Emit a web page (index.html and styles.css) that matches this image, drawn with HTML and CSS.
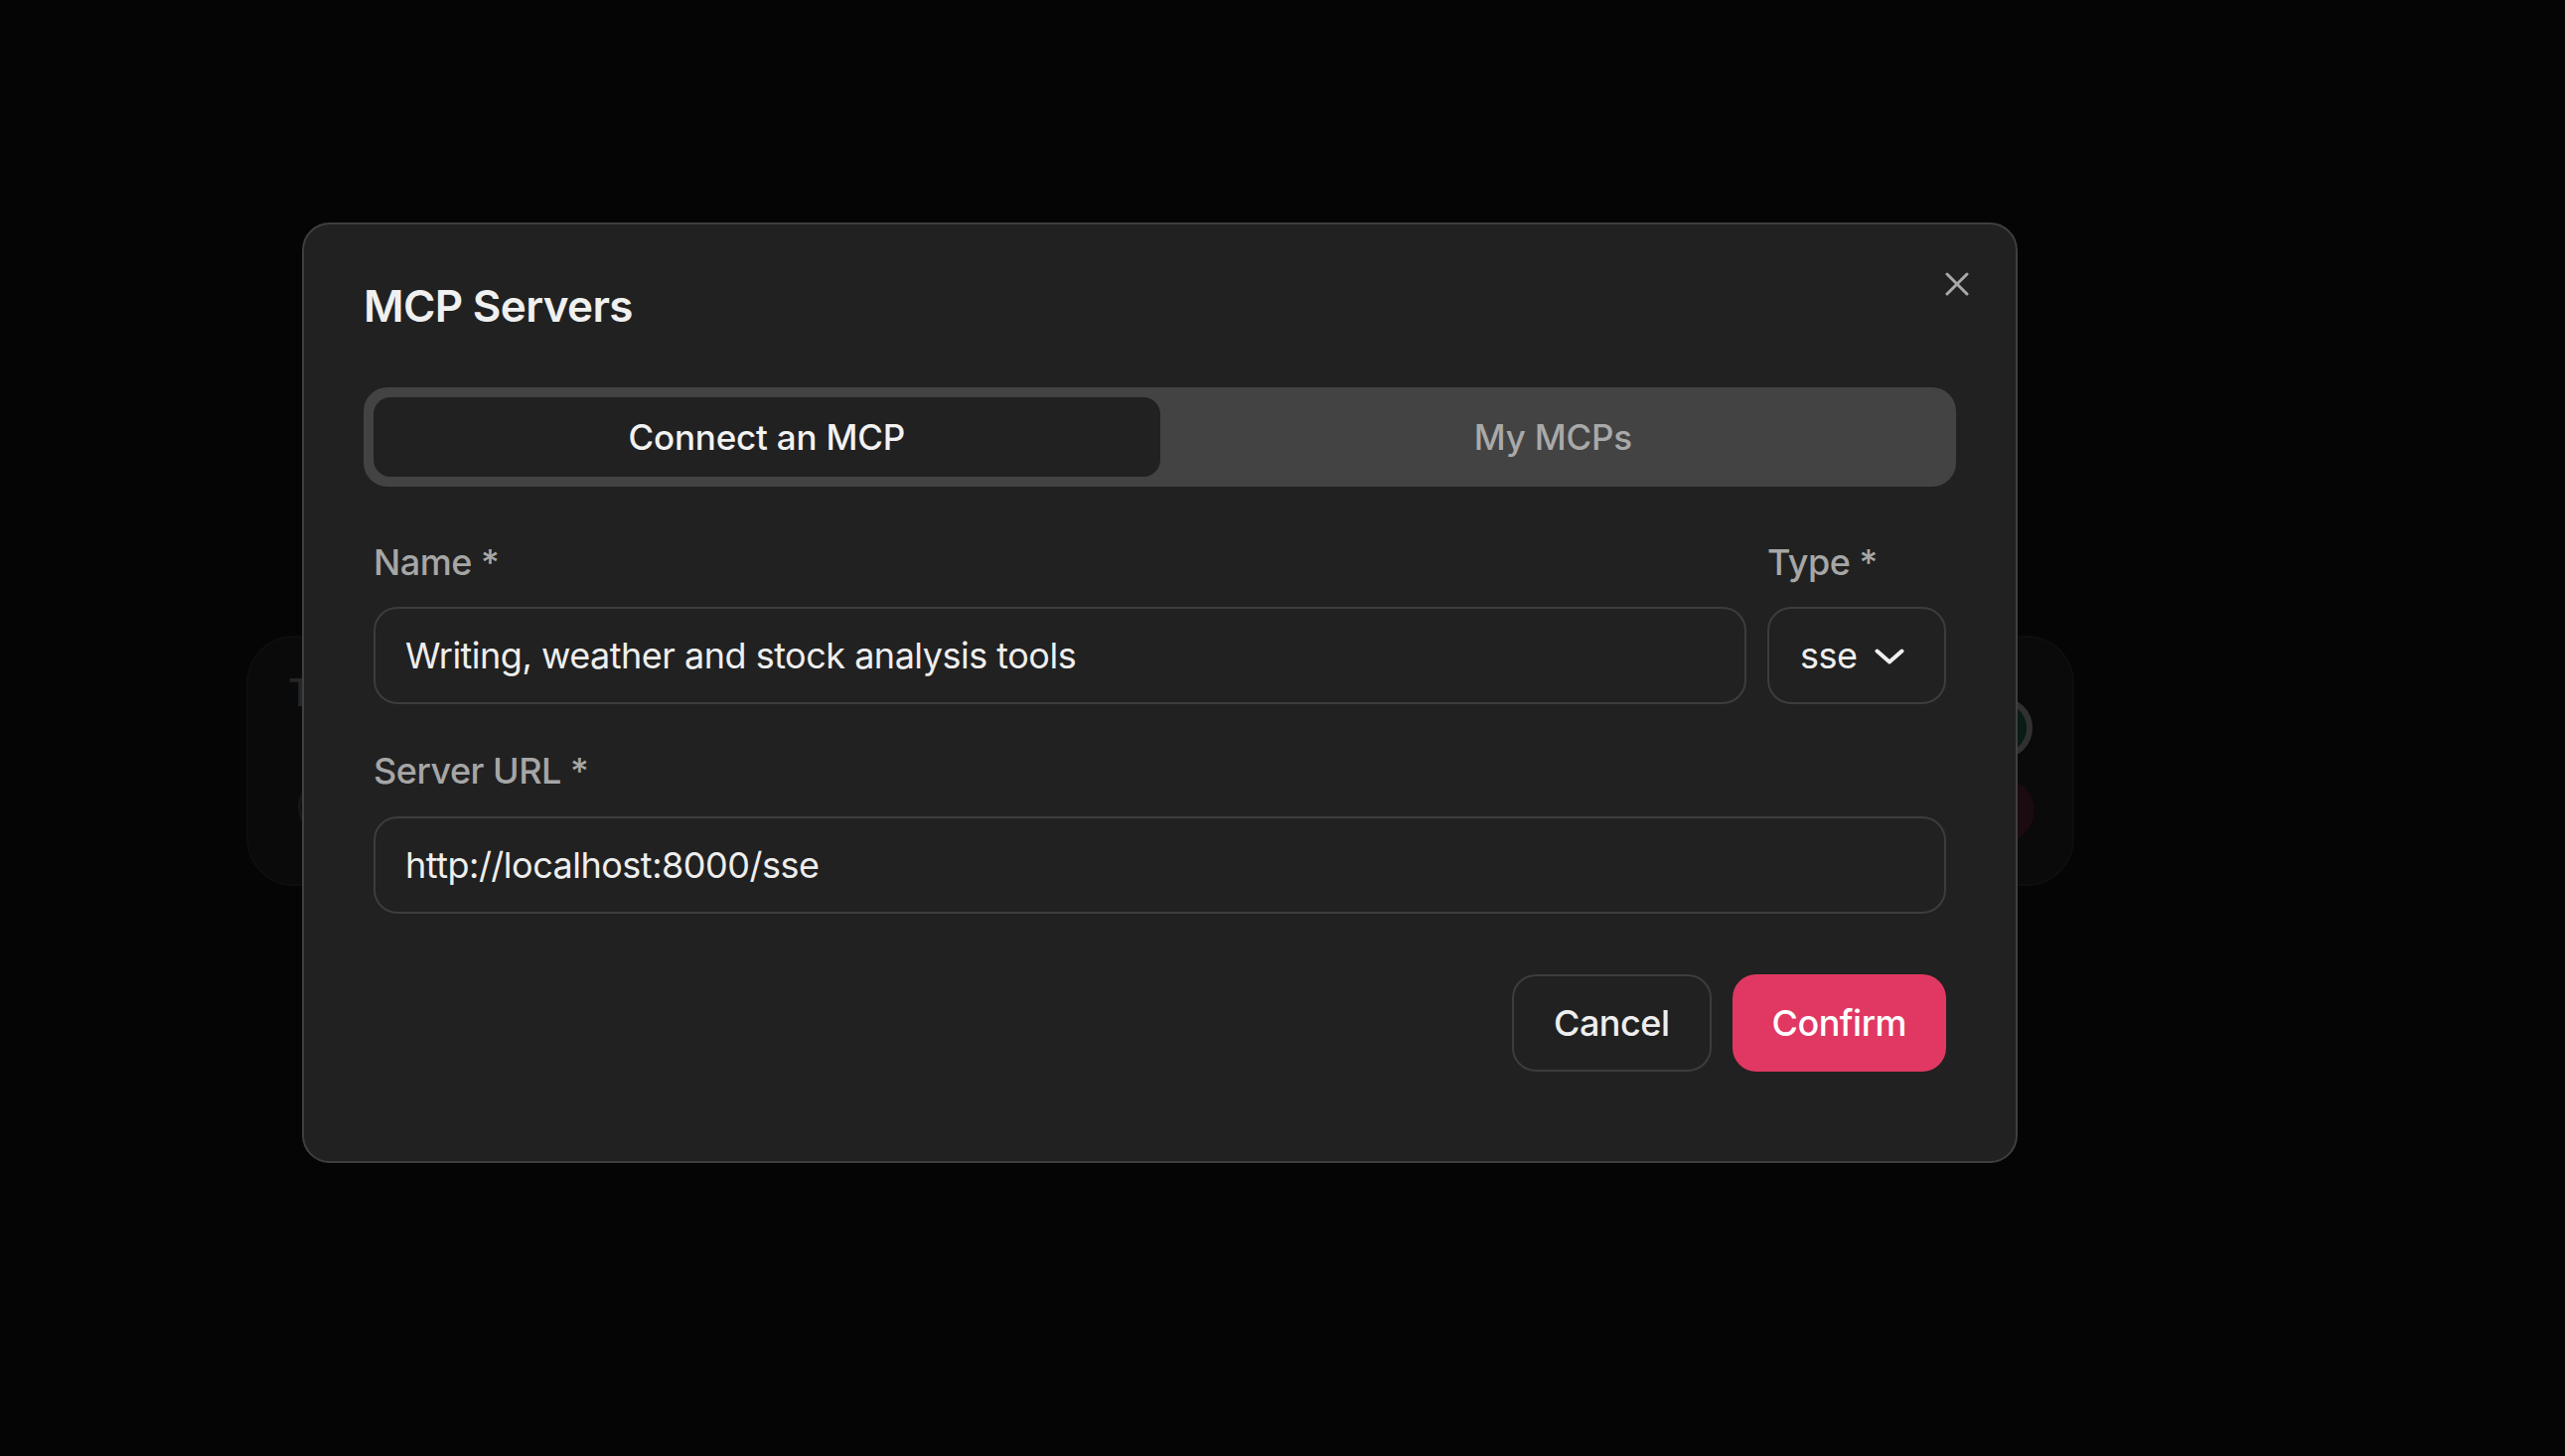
FILE: index.html
```html
<!DOCTYPE html>
<html lang="en">
<head>
<meta charset="utf-8">
<title>MCP Servers</title>
<link rel="stylesheet" href="styles.css">
</head>
<body>
<div class="page">
  <section class="bg-card">
    <div class="bg-text">
      <div class="bg-title">Tools</div>
      <div class="bg-pill">Use</div>
    </div>
    <div class="bg-actions">
      <span class="bg-ring"></span>
      <span class="bg-dot"></span>
    </div>
  </section>
</div>

<div class="overlay">
  <div class="modal" role="dialog" aria-label="MCP Servers">
    <button class="close" aria-label="Close">
      <svg width="24" height="24" viewBox="0 0 24 24"><path d="M2 2L22 22M22 2L2 22" stroke="#a9a9a9" stroke-width="3" stroke-linecap="round" fill="none"/></svg>
    </button>
    <h2 class="title">MCP Servers</h2>
    <div class="tabs">
      <button class="tab tab-active">Connect an MCP</button>
      <button class="tab">My MCPs</button>
    </div>
    <form class="form">
      <div class="row">
        <div class="field field-grow">
          <label class="label">Name *</label>
          <div class="input">Writing, weather and stock analysis tools</div>
        </div>
        <div class="field field-type">
          <label class="label">Type *</label>
          <div class="input select">
            <span>sse</span>
            <svg width="30" height="16" viewBox="0 0 30 16"><polyline points="2.5,2.5 15,13.5 27.5,2.5" stroke="#f0f0f0" stroke-width="4" stroke-linecap="round" stroke-linejoin="round" fill="none"/></svg>
          </div>
        </div>
      </div>
      <div class="field field-url">
        <label class="label">Server URL *</label>
        <div class="input">http://localhost:8000/sse</div>
      </div>
      <div class="footer">
        <button type="button" class="btn btn-cancel">Cancel</button>
        <button type="button" class="btn btn-confirm">Confirm</button>
      </div>
    </form>
  </div>
</div>
</body>
</html>
```

FILE: styles.css
```css
* { box-sizing: border-box; }

html, body {
  margin: 0;
  padding: 0;
  background: #050505;
  font-family: Inter, "Noto Sans", "Liberation Sans", sans-serif;
  color: #f0f0f0;
}

.page {
  padding: 640px 0 0 248px;
  min-height: 1466px;
}

.bg-card {
  width: 1840px;
  height: 252px;
  border-radius: 48px;
  background: #0a0a0a;
  border: 2px solid #0e0e0e;
  display: flex;
  justify-content: space-between;
  padding: 32px 38px 0 40px;
}

.bg-title {
  font-size: 38px;
  line-height: 46px;
  color: #262626;
  font-weight: 500;
}

.bg-pill {
  margin-top: 62px;
  margin-left: 10px;
  font-size: 1px;
  color: transparent;
  width: 200px;
  height: 60px;
  border-radius: 30px;
  border: 3px solid #161616;
}

.bg-actions {
  display: flex;
  flex-direction: column;
  gap: 20px;
  padding-top: 28px;
}

.bg-ring {
  width: 62px;
  height: 62px;
  border-radius: 50%;
  border: 6px solid #303030;
  background: #0a1a16;
}

.bg-dot {
  width: 64px;
  height: 64px;
  border-radius: 50%;
  background: #1b0a0f;
}

.overlay {
  position: fixed;
  inset: 0;
  display: flex;
  align-items: flex-start;
  padding: 224px 0 0 304px;
}

.modal {
  position: relative;
  width: 1727px;
  background: #212121;
  border: 2px solid #3f3f3f;
  border-radius: 28px;
  padding: 56px 60px 90px 60px;
}

.close {
  position: absolute;
  top: 48px;
  right: 47px;
  width: 24px;
  height: 24px;
  padding: 0;
  border: 0;
  background: transparent;
  display: flex;
}

.title {
  margin: 0;
  font-size: 44px;
  line-height: 53px;
  font-weight: 600;
  color: #f0f0f0;
  letter-spacing: -0.65px;
}

.tabs {
  margin-top: 55px;
  height: 100px;
  padding: 10px;
  background: #434343;
  border-radius: 24px;
  display: grid;
  grid-template-columns: 1fr 1fr;
}

.tab {
  font-family: inherit;
  border: 0;
  background: transparent;
  border-radius: 17px;
  font-size: 35px;
  font-weight: 500;
  letter-spacing: -0.2px;
  color: #a9a9a9;
  padding: 0;
}

.tab-active {
  background: #212121;
  color: #f2f2f2;
}

.form {
  margin: 54px 0 0 0;
  padding: 0 10px;
}

.row {
  display: flex;
  gap: 21px;
}

.field {
  display: flex;
  flex-direction: column;
}

.field-grow { flex: 1; }

.field-type { width: 180px; }

.field-url { margin-top: 45px; }

.label {
  font-size: 36px;
  line-height: 44px;
  font-weight: 500;
  letter-spacing: -0.5px;
  color: #a6a6a6;
  margin-bottom: 23px;
}

.field-url .label { margin-bottom: 24px; }

.input {
  height: 98px;
  border: 2px solid #3d3d3d;
  border-radius: 24px;
  padding: 0 30px;
  display: flex;
  align-items: center;
  font-size: 36px;
  letter-spacing: -0.5px;
  color: #eeeeee;
  white-space: nowrap;
}

.select {
  justify-content: space-between;
  padding: 0 40px 0 31px;
}

.select svg { flex: none; margin-top: 2px; }

.footer {
  margin-top: 61px;
  display: flex;
  justify-content: flex-end;
  gap: 21px;
}

.btn {
  font-family: inherit;
  height: 98px;
  border-radius: 24px;
  font-size: 36px;
  font-weight: 500;
  letter-spacing: -0.5px;
  padding: 0 40px;
}

.btn-cancel {
  background: transparent;
  border: 2px solid #3d3d3d;
  color: #eeeeee;
}

.btn-confirm {
  background: #e13863;
  border: 0;
  color: #ffffff;
}
```
